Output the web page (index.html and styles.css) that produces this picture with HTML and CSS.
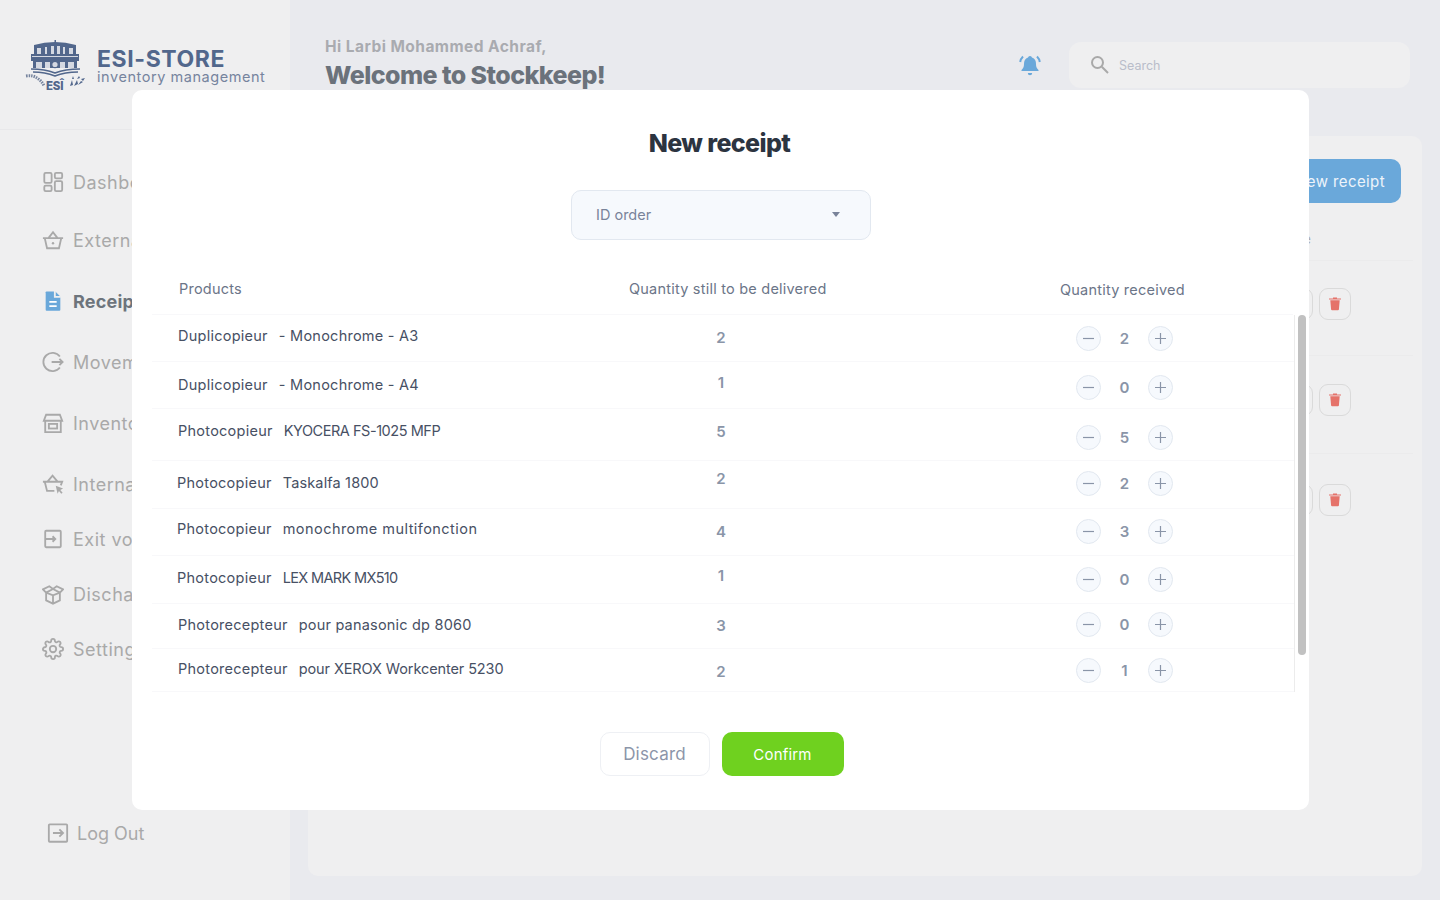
FILE: index.html
```html
<!DOCTYPE html>
<html lang="en">

<head>
    <meta charset="UTF-8">
    <title>Stockkeep - New receipt</title>
    <link rel="stylesheet" href="styles.css">
</head>

<body>
    <div class="app">
        <!-- sidebar -->
        <aside class="sidebar">
            <div class="brand">
                <svg class="brand-logo" width="64" height="52" viewBox="0 0 64 52">
                    <g class="logo-ink">
                        <path d="M9 5 Q30 -1 51 5 V14 H9 Z" />
                        <rect x="29.500" y="0" width="1.500" height="3" />
                        <rect x="6" y="14" width="48" height="7" />
                        <rect x="8" y="21" width="44" height="7" />
                    </g>
                    <g class="logo-hole">
                        <path d="M12 14 V8 h4 v6 Z M20 14 V7 h2 v7 Z M26 14 V6 h3 v8 Z M32 14 V6 h3 v8 Z M38 14 V7 h2 v7 Z M44 14 V8 h4 v6 Z" />
                        <rect x="7" y="16" width="46" height="1" />
                        <path d="M11 28 V22 h6 v6 Z M20 28 V22 h5 v6 Z M35 28 V22 h5 v6 Z M43 28 V22 h6 v6 Z" />
                    </g>
                    <circle class="logo-ring" cx="30" cy="24.500" r="3.200" />
                    <path class="logo-line" d="M6 29 Q20 29 30 33 Q40 29 55 29 M8 32 Q20 32 30 36 Q40 32 53 32" />
                    <path class="logo-dots" d="M1 36 Q8 35 12 38 Q17 41 19 46" />
                    <path class="logo-ink" d="M45 46 l2-6 1 5 Z M49 46 l3-6 1 4 Z M53 45 l3-4 2 1 Z M47 39 l1-3 1 3 Z M52 39 l2-3 1 2 Z M56 39 l4-1 -2 3 Z" />
                    <text x="21" y="49.500" class="brand-esi">ESÎ</text>
                </svg>
                <div class="brand-text">
                    <div class="brand-name">ESI-STORE</div>
                    <div class="brand-sub">inventory management</div>
                </div>
            </div>
            <nav class="nav">
                <a class="nav-item first">
                    <svg class="nav-icon" viewBox="0 0 24 24"><rect x="2.500" y="2" width="8" height="11" rx="1.500" /><rect x="14" y="2" width="8" height="6" rx="1.500" /><rect x="2.500" y="16" width="8" height="6" rx="1.500" /><rect x="14" y="11" width="8" height="11" rx="1.500" /></svg>
                    Dashboard
                </a>
                <a class="nav-item">
                    <svg class="nav-icon" viewBox="0 0 24 24"><path d="M1 10h22M3 10l2.500 11h13L21 10M7 10L12 3.500 17 10" /><circle class="filled" cx="12" cy="15.500" r="1.300" /></svg>
                    External orders
                </a>
                <a class="nav-item active">
                    <svg class="nav-icon" viewBox="0 0 24 24"><path class="filled" d="M5 1.500h9.500L20 7v14.500a1 1 0 0 1-1 1H5a1 1 0 0 1-1-1v-19a1 1 0 0 1 1-1Z" /><path class="doc-lines" d="M8 13h8M8 17.500h8" /><path class="doc-fold" d="M14 1V7.500H20.500" /></svg>
                    Receipts
                </a>
                <a class="nav-item">
                    <svg class="nav-icon" viewBox="0 0 24 24"><path d="M19.500 6A10 10 0 1 0 19.500 18M10.500 12h12M19 8.500l3.500 3.500-3.500 3.500" /></svg>
                    Movements
                </a>
                <a class="nav-item">
                    <svg class="nav-icon" viewBox="0 0 24 24"><path d="M4.500 3h15l2.500 6.500H2ZM3.500 9.500V22h17V9.500" /><rect x="7.500" y="13" width="9" height="5" /></svg>
                    Inventory
                </a>
                <a class="nav-item short">
                    <svg class="nav-icon" viewBox="0 0 24 24"><path d="M1 9.500h21l-1.500 4M3 9.500l2.500 10h8M6 9.500L11.500 3 17 9.500" /><path class="filled" d="M15 14l8 3-3 1.500 2.500 3-1.500 1.200-2.500-3-1.500 2.800Z" /></svg>
                    Internal orders
                </a>
                <a class="nav-item short">
                    <svg class="nav-icon" viewBox="0 0 24 24"><rect x="3.500" y="3" width="17" height="18" rx="1" /><path d="M3.500 12h11M11.500 9l3 3-3 3" /></svg>
                    Exit vouchers
                </a>
                <a class="nav-item short">
                    <svg class="nav-icon" viewBox="0 0 24 24"><path d="M4.500 10.500v8.500l7.500 3.500 7.500-3.500v-8.500M12 13.500v9M4.500 10.500l7.500 3 7.500-3M4.500 10.500L1 7l7-3.500L12 6.500l4-3L23 7l-3.500 3.500M12 6.500l-7.500 4M12 6.500l7.500 4" /></svg>
                    Discharge
                </a>
                <a class="nav-item">
                    <svg class="nav-icon" viewBox="0 0 24 24"><circle cx="12" cy="12" r="3.500" /><path d="M19.400 15a1.650 1.650 0 0 0 .33 1.820l.06.06a2 2 0 0 1 0 2.830 2 2 0 0 1-2.830 0l-.06-.06a1.650 1.650 0 0 0-1.820-.33 1.650 1.650 0 0 0-1 1.510V21a2 2 0 0 1-2 2 2 2 0 0 1-2-2v-.09A1.650 1.650 0 0 0 9 19.400a1.650 1.650 0 0 0-1.820.33l-.06.06a2 2 0 0 1-2.830 0 2 2 0 0 1 0-2.830l.06-.06a1.650 1.650 0 0 0 .33-1.820 1.650 1.650 0 0 0-1.510-1H3a2 2 0 0 1-2-2 2 2 0 0 1 2-2h.09A1.650 1.650 0 0 0 4.600 9a1.650 1.650 0 0 0-.33-1.820l-.06-.06a2 2 0 0 1 0-2.830 2 2 0 0 1 2.830 0l.06.06a1.650 1.650 0 0 0 1.820.33H9a1.650 1.650 0 0 0 1-1.510V3a2 2 0 0 1 2-2 2 2 0 0 1 2 2v.09a1.650 1.650 0 0 0 1 1.510 1.650 1.650 0 0 0 1.820-.33l.06-.06a2 2 0 0 1 2.830 0 2 2 0 0 1 0 2.830l-.06.06a1.650 1.650 0 0 0-.33 1.820V9a1.650 1.650 0 0 0 1.510 1H21a2 2 0 0 1 2 2 2 2 0 0 1-2 2h-.09a1.650 1.650 0 0 0-1.510 1z" /></svg>
                    Settings
                </a>
            </nav>
            <a class="logout">
                <svg class="nav-icon" viewBox="0 0 24 24"><rect x="2" y="2.500" width="20" height="19" rx="1" /><path d="M6.500 12h11M13.500 8l4 4-4 4" /></svg>
                Log Out
            </a>
        </aside>

        <!-- page behind the modal -->
        <main class="main">
            <header class="topbar">
                <div class="greeting">
                    <div class="hello">Hi Larbi Mohammed Achraf,</div>
                    <div class="welcome">Welcome to Stockkeep!</div>
                </div>
                <svg class="bell" width="24" height="24" viewBox="0 0 24 24">
                    <path class="bell-body" d="M12 3a2 2 0 0 1 2 1.600c3 1 4 3.400 4 6.400 0 3 .8 4.500 2.500 6v1h-17v-1C5.200 15.500 6 14 6 11c0-3 1-5.400 4-6.400A2 2 0 0 1 12 3ZM9.800 20h4.400a2.200 2.200 0 0 1-4.400 0Z" />
                    <path class="bell-ring" d="M5 3.500A10 10 0 0 0 2.200 9M19 3.500A10 10 0 0 1 21.800 9" />
                </svg>
                <div class="search">
                    <svg width="22" height="22" viewBox="0 0 22 22" class="search-icon"><circle cx="8.500" cy="8.500" r="5.500" /><path d="M12.800 12.800L19 19" /></svg>
                    <span>Search</span>
                </div>
            </header>

            <section class="panel">
                <div class="panel-top">
                    <button class="new-btn">New receipt</button>
                </div>
                <div class="list-head">Date</div>
                <div class="list-row row-a">
                    <span class="edit-btn"></span>
                    <span class="del-btn"><svg width="14" height="14" viewBox="0 0 14 14"><use href="#trash" /></svg></span>
                </div>
                <div class="list-row row-b">
                    <span class="edit-btn"></span>
                    <span class="del-btn"><svg width="14" height="14" viewBox="0 0 14 14"><use href="#trash" /></svg></span>
                </div>
                <div class="list-row row-c">
                    <span class="edit-btn"></span>
                    <span class="del-btn"><svg width="14" height="14" viewBox="0 0 14 14"><use href="#trash" /></svg></span>
                </div>
            </section>
        </main>
    </div>

    <svg width="0" height="0" class="defs">
        <symbol id="trash" viewBox="0 0 14 14">
            <path d="M1 1.500h12v1H1ZM5 .5h4v1H5Z" fill="#e5736a" />
            <path d="M2.300 3.200h9.400L10.900 12.500a1 1 0 0 1-1 .8H4.100a1 1 0 0 1-1-.8Z" fill="#e5736a" />
        </symbol>
        <symbol id="minus" viewBox="0 0 13 13">
            <path d="M1 6.500h11" stroke="#8a95a8" stroke-width="1.200" />
        </symbol>
        <symbol id="plus" viewBox="0 0 13 13">
            <path d="M1 6.500h11M6.500 1v11" stroke="#8a95a8" stroke-width="1.200" />
        </symbol>
    </svg>

    <!-- new receipt modal -->
    <div class="modal">
        <h1 class="modal-title">New receipt</h1>
        <div class="select">
            <span>ID order</span>
            <i class="caret"></i>
        </div>

        <div class="table-head">
            <div class="th-products">Products</div>
            <div class="th-still">Quantity still to be delivered</div>
            <div class="th-received">Quantity received</div>
        </div>

        <div class="table-wrap">
            <div class="rows">
                <div class="row r1">
                    <div class="c-product"><span>Duplicopieur</span><span>- Monochrome - A3</span></div>
                    <div class="c-still">2</div>
                    <div class="stepper"><b class="step"><svg width="13" height="13"><use href="#minus" /></svg></b><span>2</span><b class="step"><svg width="13" height="13"><use href="#plus" /></svg></b></div>
                </div>
                <div class="row r2">
                    <div class="c-product"><span>Duplicopieur</span><span>- Monochrome - A4</span></div>
                    <div class="c-still">1</div>
                    <div class="stepper"><b class="step"><svg width="13" height="13"><use href="#minus" /></svg></b><span>0</span><b class="step"><svg width="13" height="13"><use href="#plus" /></svg></b></div>
                </div>
                <div class="row r3">
                    <div class="c-product"><span>Photocopieur</span><span>KYOCERA FS-1025 MFP</span></div>
                    <div class="c-still">5</div>
                    <div class="stepper"><b class="step"><svg width="13" height="13"><use href="#minus" /></svg></b><span>5</span><b class="step"><svg width="13" height="13"><use href="#plus" /></svg></b></div>
                </div>
                <div class="row r4">
                    <div class="c-product"><span>Photocopieur</span><span>Taskalfa 1800</span></div>
                    <div class="c-still">2</div>
                    <div class="stepper"><b class="step"><svg width="13" height="13"><use href="#minus" /></svg></b><span>2</span><b class="step"><svg width="13" height="13"><use href="#plus" /></svg></b></div>
                </div>
                <div class="row r5">
                    <div class="c-product"><span>Photocopieur</span><span>monochrome multifonction</span></div>
                    <div class="c-still">4</div>
                    <div class="stepper"><b class="step"><svg width="13" height="13"><use href="#minus" /></svg></b><span>3</span><b class="step"><svg width="13" height="13"><use href="#plus" /></svg></b></div>
                </div>
                <div class="row r6">
                    <div class="c-product"><span>Photocopieur</span><span>LEX MARK MX510</span></div>
                    <div class="c-still">1</div>
                    <div class="stepper"><b class="step"><svg width="13" height="13"><use href="#minus" /></svg></b><span>0</span><b class="step"><svg width="13" height="13"><use href="#plus" /></svg></b></div>
                </div>
                <div class="row r7">
                    <div class="c-product"><span>Photorecepteur</span><span>pour panasonic dp 8060</span></div>
                    <div class="c-still">3</div>
                    <div class="stepper"><b class="step"><svg width="13" height="13"><use href="#minus" /></svg></b><span>0</span><b class="step"><svg width="13" height="13"><use href="#plus" /></svg></b></div>
                </div>
                <div class="row r8">
                    <div class="c-product"><span>Photorecepteur</span><span>pour XEROX Workcenter 5230</span></div>
                    <div class="c-still">2</div>
                    <div class="stepper"><b class="step"><svg width="13" height="13"><use href="#minus" /></svg></b><span>1</span><b class="step"><svg width="13" height="13"><use href="#plus" /></svg></b></div>
                </div>
            </div>
            <div class="scrollbar"><div class="thumb"></div></div>
        </div>

        <div class="actions">
            <button class="btn-discard">Discard</button>
            <button class="btn-confirm">Confirm</button>
        </div>
    </div>
</body>

</html>
```

FILE: styles.css
```css
* {
    box-sizing: border-box;
}

body {
    margin: 0;
    width: 1440px;
    height: 900px;
    overflow: hidden;
    font-family: Inter, "Noto Sans", sans-serif;
    background-color: #e9eaee;
}

.app {
    display: flex;
    height: 900px;
}

.defs {
    position: absolute;
}

/* sidebar */
.sidebar {
    width: 290px;
    background-color: #efeff0;
    display: flex;
    flex-direction: column;
}

.brand {
    height: 130px;
    border-bottom: 1px solid #e8e8ea;
    display: flex;
    padding: 40px 0 0 25px;
    gap: 8px;
}

.brand-logo {
    flex: none;
}

.logo-ink {
    fill: #52678c;
}

.logo-hole {
    fill: #d5d9e2;
}

.logo-ring {
    fill: #d5d9e2;
    stroke: #52678c;
    stroke-width: 1.200;
}

.logo-line {
    fill: none;
    stroke: #52678c;
    stroke-width: 1.500;
}

.logo-dots {
    fill: none;
    stroke: #76849e;
    stroke-width: 3;
    stroke-dasharray: 1.500 1;
}

.brand-esi {
    font-size: 11.500px;
    font-weight: 800;
    letter-spacing: -0.2px;
    fill: #52678c;
}

.brand-text {
    color: #52678c;
    padding-top: 8px;
}

.brand-name {
    font-size: 23px;
    line-height: 22px;
    font-weight: 700;
    letter-spacing: 0.6px;
}

.brand-sub {
    font-size: 14.500px;
    line-height: 14px;
    letter-spacing: 0.55px;
    color: #76849e;
}

.nav {
    padding: 40px 0 0 42px;
    white-space: nowrap;
}

.nav-item,
.logout {
    display: flex;
    align-items: center;
    gap: 9px;
    height: 24px;
    font-size: 18px;
    color: #a9a9a9;
    margin-bottom: 37px;
}

.nav-item {
    letter-spacing: 0.5px;
}

.nav-item.first {
    margin-bottom: 34px;
}

.nav-item.short {
    margin-bottom: 31px;
}

.nav-item.active {
    font-weight: 700;
    color: #6d747c;
    letter-spacing: 0.2px;
}

.nav-icon {
    width: 22px;
    height: 22px;
    flex: none;
    fill: none;
    stroke: #a9a9a9;
    stroke-width: 2;
}

.nav-icon .filled {
    fill: #a9a9a9;
    stroke: none;
}

.active .nav-icon .filled {
    fill: #6aa8da;
}

.active .doc-lines {
    stroke: #fff;
}

.active .doc-fold {
    stroke: #efeff0;
}

.logout {
    margin: auto 0 55px 47px;
    gap: 8px;
}

/* page behind the modal */
.main {
    flex: 1;
    padding-right: 18px;
    display: flex;
    flex-direction: column;
}

.topbar {
    height: 136px;
    display: flex;
    align-items: flex-start;
    padding: 36px 12px 0 35px;
}

.greeting {
    flex: 1;
    padding-top: 1px;
}

.hello {
    font-size: 15.500px;
    line-height: 20px;
    font-weight: 700;
    letter-spacing: 0.45px;
    color: #a9abb0;
}

.welcome {
    font-size: 25px;
    line-height: 37px;
    font-weight: 800;
    color: #6b727b;
    letter-spacing: -0.55px;
}

.bell {
    margin: 17px 27px 0 0;
}

.bell-body {
    fill: #6aa8da;
}

.bell-ring {
    fill: none;
    stroke: #6aa8da;
    stroke-width: 2;
}

.search {
    width: 341px;
    height: 46px;
    margin-top: 6px;
    background-color: #efeff0;
    border-radius: 12px;
    display: flex;
    align-items: center;
    padding-left: 20px;
    gap: 8px;
    font-size: 12.500px;
    color: #b9bdca;
}

.search-icon {
    fill: none;
    stroke: #a9a9a9;
    stroke-width: 2;
}

.panel {
    flex: 1;
    margin: 0 0 24px 18px;
    background-color: #efeff0;
    border-radius: 10px;
    padding: 23px 9px 0 0;
}

.panel-top {
    display: flex;
    justify-content: flex-end;
    padding-right: 12px;
}

.new-btn {
    height: 44px;
    width: 160px;
    border: none;
    border-radius: 10px;
    background-color: #6aa8da;
    color: #eef4fa;
    font-family: inherit;
    font-size: 15px;
    letter-spacing: 0.4px;
    text-align: right;
    padding: 0 16px 0 0;
}

.list-head {
    text-align: right;
    padding-right: 102px;
    margin-top: 27px;
    font-size: 14px;
    line-height: 18px;
    color: #a9a9a9;
    height: 30px;
}

.list-row {
    display: flex;
    justify-content: flex-end;
    gap: 6px;
    border-top: 1px solid #ebebec;
    padding-right: 62px;
}

.row-a {
    height: 95px;
    padding-top: 27px;
}

.row-b {
    height: 98px;
    padding-top: 28px;
}

.row-c {
    padding-top: 30px;
}

.edit-btn,
.del-btn {
    width: 32px;
    height: 32px;
    border: 1px solid #dadada;
    border-radius: 9px;
    display: flex;
    align-items: center;
    justify-content: center;
}

/* modal */
.modal {
    position: absolute;
    left: 132px;
    top: 90px;
    width: 1177px;
    height: 720px;
    background-color: #fff;
    border-radius: 10px;
    display: flex;
    flex-direction: column;
}

.modal-title {
    margin: 35px 2px 0 0;
    font-size: 25px;
    line-height: 36px;
    font-weight: 800;
    letter-spacing: -0.6px;
    color: #2c3440;
    text-align: center;
}

.select {
    width: 300px;
    height: 50px;
    margin: 29px 0 0 439px;
    background-color: #f6f9fd;
    border: 1px solid #e2e8f0;
    border-radius: 10px;
    display: flex;
    align-items: center;
    justify-content: space-between;
    padding: 0 30px 1px 24px;
    font-size: 14.500px;
    color: #79839a;
}

.caret {
    border-left: 4.500px solid transparent;
    border-right: 4.500px solid transparent;
    border-top: 5px solid #79839a;
}

.table-head {
    display: flex;
    height: 75px;
    padding-top: 40px;
    font-size: 14.500px;
    line-height: 18px;
    letter-spacing: 0.22px;
    color: #6b7588;
    border-bottom: 1px solid #f8f8fa;
    margin-left: 20px;
    margin-right: 16px;
}

.th-products {
    margin-left: 27px;
    width: 450px;
}

.th-still {
    width: 431px;
}

.th-received {
    padding-top: 1px;
}

.table-wrap {
    display: flex;
    height: 377px;
    margin-left: 20px;
}

.rows {
    width: 1142px;
}

.row {
    display: flex;
    align-items: flex-start;
    border-bottom: 1px solid #f8f8fa;
}

.c-product {
    display: flex;
    gap: 11px;
    width: 549px;
    padding-left: 26px;
    height: 20px;
    font-size: 14.500px;
    line-height: 20px;
    letter-spacing: 0.25px;
    color: #475064;
    margin-top: var(--p);
}

.c-still {
    width: 40px;
    text-align: center;
    height: 20px;
    line-height: 20px;
    font-size: 15px;
    font-weight: 600;
    color: #8a95a8;
    margin-top: var(--q);
}

.stepper {
    display: flex;
    align-items: center;
    margin-left: 335px;
    width: 97px;
    height: 24px;
    justify-content: space-between;
    font-size: 15px;
    font-weight: 600;
    color: #8a95a8;
    margin-top: var(--s);
}

.step {
    width: 25px;
    height: 25px;
    border: 1px solid #e2e8f0;
    border-radius: 50%;
    background-color: #f6f9fd;
    display: flex;
    align-items: center;
    justify-content: center;
}

.r1 { height: 47px; --p: 11px; --q: 13px; --s: 11px; }
.r2 { height: 47px; --p: 13px; --q: 11px; --s: 13px; }
.r3 { height: 52px; --p: 12px; --q: 13px; --s: 16px; }
.r4 { height: 48px; --p: 12px; --q: 8px; --s: 10px; }
.r5 { height: 47px; --p: 10px; --q: 13px; --s: 10px; }
.r6 { height: 48px; --p: 12px; --q: 10px; --s: 11px; }
.r7 { height: 45px; --p: 11px; --q: 12px; --s: 8px; }
.r8 { height: 43px; --p: 10px; --q: 13px; --s: 9px; }

.r4 .c-product,
.r5 .c-product,
.r6 .c-product {
    padding-left: 25px;
}

.r3 .c-product span:last-child { letter-spacing: -0.45px; }
.r4 .c-product span:last-child { letter-spacing: 0.15px; }
.r5 .c-product span:last-child { letter-spacing: 0.45px; }
.r6 .c-product span:last-child { letter-spacing: -0.65px; }
.r7 .c-product span:last-child { letter-spacing: 0.2px; }
.r8 .c-product span:last-child { letter-spacing: -0.1px; }

.scrollbar {
    width: 15px;
    background-color: #fff;
    border-left: 1px solid #ececec;
    padding: 0 3px;
}

.thumb {
    width: 8px;
    height: 340px;
    background-color: #c1c1c1;
    border-radius: 4px;
}

.actions {
    display: flex;
    justify-content: center;
    gap: 12px;
    margin: 40px 0 0 2px;
}

.btn-discard,
.btn-confirm {
    height: 44px;
    border-radius: 10px;
    font-family: inherit;
}

.btn-discard {
    width: 110px;
    border: 1px solid #eef0f4;
    background-color: #fff;
    color: #8c95a9;
    font-size: 17px;
    letter-spacing: 0.2px;
}

.btn-confirm {
    width: 122px;
    border: none;
    background-color: #6fd11f;
    color: #fff;
    font-size: 15px;
    letter-spacing: 0.2px;
}
```
